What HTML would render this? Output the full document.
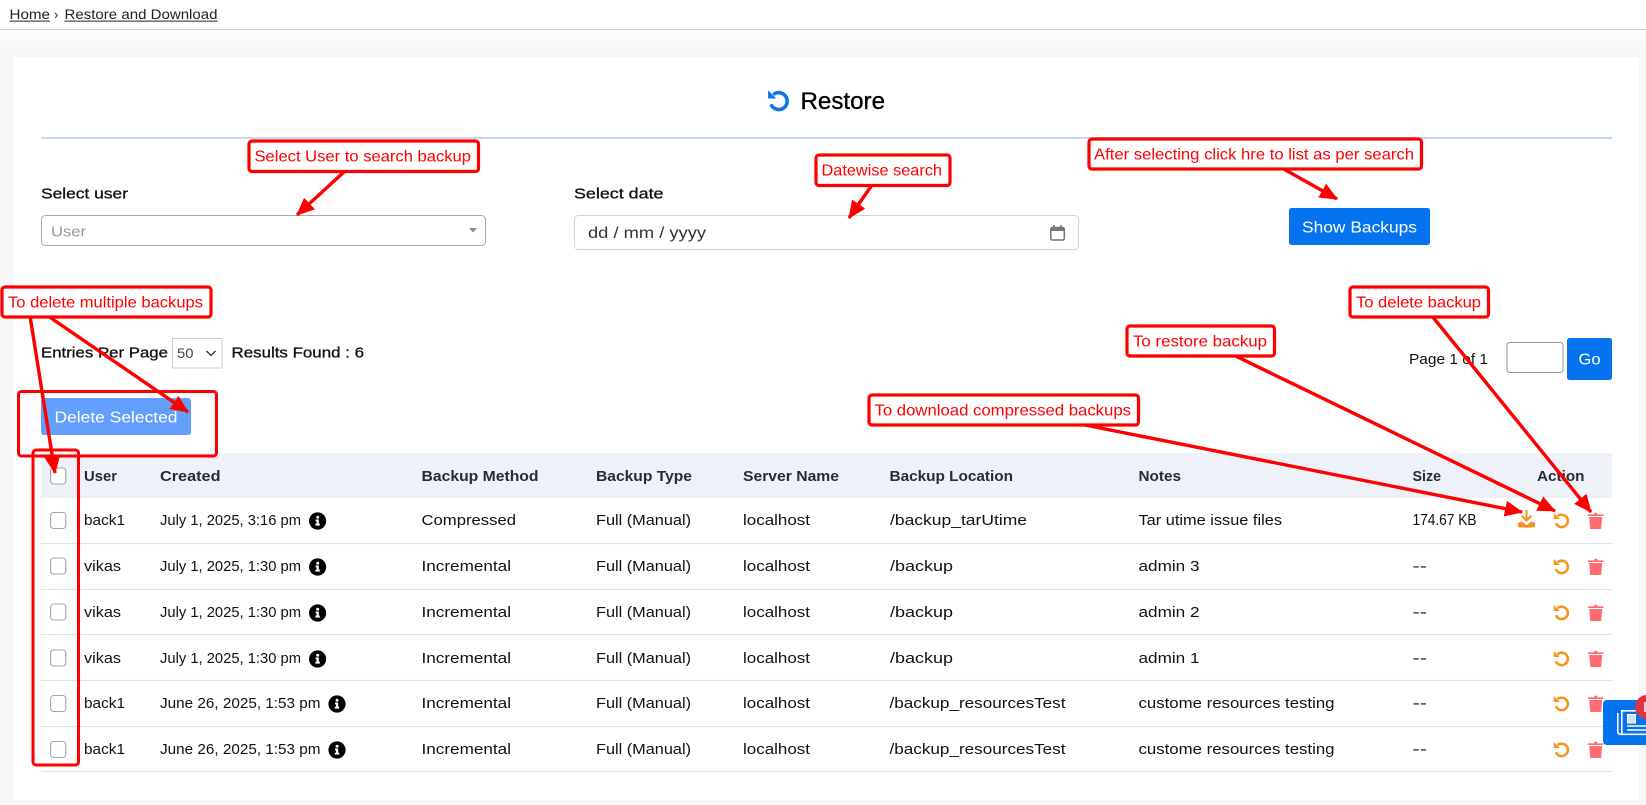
<!DOCTYPE html>
<html lang="en"><head><meta charset="utf-8"><title>Restore</title>
<style>
html,body{margin:0;padding:0;width:1646px;height:805px;overflow:hidden;background:#f6f6f6}
svg{display:block}
text{font-family:"Liberation Sans",sans-serif;font-size:15px;fill:#111}
.h{font-weight:700;fill:#262b36;font-size:14.5px}
.m{stroke:#111;stroke-width:.3px}
.a{fill:#f00;font-size:16px}
.box{fill:#fff;stroke:#f00;stroke-width:3.2}
.ar{stroke:#f00;stroke-width:3.4;fill:none;marker-end:url(#mh)}
.cb{fill:#fff;stroke:#a4a4ac;stroke-width:1.1}
.ln{stroke:#dee2e6;stroke-width:1.3}
</style></head><body>
<svg width="1646" height="805" viewBox="0 0 1646 805" xmlns="http://www.w3.org/2000/svg">
<defs>
<linearGradient id="tg" x1="0" y1="0" x2="0" y2="1"><stop offset="0" stop-color="#fdfdfd"/><stop offset="1" stop-color="#f5f5f5"/></linearGradient>
<marker id="mh" markerUnits="userSpaceOnUse" markerWidth="20" markerHeight="18" refX="17" refY="8" orient="auto"><path d="M0 0L18 8L0 16Z" fill="#f00"/></marker>
<g id="rs"><path d="M4.6 4.2A6.2 6.2 0 1 1 2.9 11.2" fill="none" stroke="#f7931e" stroke-width="2.6"/><path d="M.8 1V7H6.8Z" fill="#f7931e"/></g>
<g id="tr"><path d="M0 2.4H6L6.6 .8H9L9.6 2.4H15.4V4H0Z" fill="#ff6b70"/><path d="M1.2 5H14.2L13.1 17H2.3Z" fill="#ff6b70"/></g>
<g id="inf"><circle cx="0" cy="0" r="8.6" fill="#000"/><circle cx=".1" cy="-3.8" r="1.5" fill="#fff"/><path d="M-2 -1.5H1.2V2.6H2.2V4.6H-2.2V2.6H-1V.4H-2Z" fill="#fff"/></g>
</defs>

<rect x="0" y="0" width="1646" height="29" fill="#fff"/>
<rect x="0" y="29" width="1646" height="1.3" fill="#cfcfcf"/>
<rect x="0" y="30" width="1646" height="27" fill="url(#tg)"/>
<rect x="14" y="57" width="1625" height="743" fill="#fff"/>

<text x="9.5" y="19" style="font-size:13.5px;fill:#222" textLength="40.5" lengthAdjust="spacingAndGlyphs">Home</text>
<rect x="9.5" y="20.6" width="40.5" height="1" fill="#222"/>
<text x="54" y="19" style="font-size:13px;fill:#222">›</text>
<text x="64.5" y="19" style="font-size:13.5px;fill:#222" textLength="153" lengthAdjust="spacingAndGlyphs">Restore and Download</text>
<rect x="64.5" y="20.6" width="153" height="1" fill="#222"/>

<g transform="translate(767,89) scale(1.36)"><path d="M4.6 4.2A6.2 6.2 0 1 1 2.9 11.2" fill="none" stroke="#0a75ea" stroke-width="2.6"/><path d="M.8 1V7H6.8Z" fill="#0a75ea"/></g>
<text x="800.5" y="109" style="font-size:24px;fill:#000;stroke:#000;stroke-width:.35" textLength="84.5" lengthAdjust="spacingAndGlyphs">Restore</text>
<rect x="41" y="137" width="1571" height="2" fill="#c2dcf8"/>

<text class="m" x="41" y="198.500" textLength="87" lengthAdjust="spacingAndGlyphs">Select user</text>
<text class="m" x="574" y="198.500" textLength="89.500" lengthAdjust="spacingAndGlyphs">Select date</text>

<rect x="41.500" y="215.500" width="444" height="30" rx="4" fill="#fff" stroke="#aaa"/>
<text x="51" y="236.500" style="fill:#999" textLength="35" lengthAdjust="spacingAndGlyphs">User</text>
<path d="M469 228H477L473 232.500Z" fill="#888"/>
<rect x="574.500" y="215.500" width="504" height="34" rx="4" fill="#fff" stroke="#ced4da"/>
<text x="588" y="238" style="font-size:16px;fill:#333" textLength="118" lengthAdjust="spacingAndGlyphs">dd / mm / yyyy</text>
<g fill="none" stroke="#777"><rect x="1050.800" y="227.500" width="13.500" height="12.500" rx="1.500" stroke-width="1.500"/><path d="M1050.500 227.500H1064.500V231H1050.500Z" fill="#777" stroke="none"/><path d="M1054 225V228M1061 225V228" stroke-width="1.600"/></g>

<rect x="1289" y="208" width="141" height="37" rx="2.500" fill="#0573ef"/>
<text x="1302" y="232.500" style="fill:#fff;font-size:15.500px" textLength="115" lengthAdjust="spacingAndGlyphs">Show Backups</text>

<text class="m" x="41" y="357.500" textLength="127" lengthAdjust="spacingAndGlyphs">Entries Per Page</text>
<rect x="172.500" y="338.500" width="49.500" height="29.500" fill="#fff" stroke="#ccc"/>
<text x="177" y="358" style="font-size:14px;fill:#444" textLength="16.500" lengthAdjust="spacingAndGlyphs">50</text>
<path d="M206.500 351L211 355.500L215.500 351" fill="none" stroke="#333" stroke-width="1.300"/>
<text class="m" x="231.500" y="357.500" textLength="132.500" lengthAdjust="spacingAndGlyphs">Results Found : 6</text>

<text x="1409" y="364" textLength="79" lengthAdjust="spacingAndGlyphs">Page 1 of 1</text>
<rect x="1507" y="342.500" width="56" height="30" rx="3" fill="#fff" stroke="#8f949e"/>
<rect x="1567" y="338" width="45" height="42" rx="2.500" fill="#0573ef"/>
<text x="1578.500" y="364.500" style="fill:#fff;font-size:15.500px" textLength="22" lengthAdjust="spacingAndGlyphs">Go</text>

<rect x="41" y="398" width="150" height="37" rx="3" fill="#639ffb"/>
<text x="54.500" y="422.500" style="fill:#fff;font-size:15.500px" textLength="123" lengthAdjust="spacingAndGlyphs">Delete Selected</text>

<rect x="41" y="453" width="1571" height="45" fill="#eef1f7"/>
<text class="h" x="84" y="481" textLength="33" lengthAdjust="spacingAndGlyphs">User</text>
<text class="h" x="160" y="481" textLength="60.500" lengthAdjust="spacingAndGlyphs">Created</text>
<text class="h" x="421.500" y="481" textLength="117" lengthAdjust="spacingAndGlyphs">Backup Method</text>
<text class="h" x="596" y="481" textLength="96" lengthAdjust="spacingAndGlyphs">Backup Type</text>
<text class="h" x="743" y="481" textLength="96" lengthAdjust="spacingAndGlyphs">Server Name</text>
<text class="h" x="889.500" y="481" textLength="123.500" lengthAdjust="spacingAndGlyphs">Backup Location</text>
<text class="h" x="1138.500" y="481" textLength="42.500" lengthAdjust="spacingAndGlyphs">Notes</text>
<text class="h" x="1412.500" y="481" style="font-size:15px" textLength="28.500" lengthAdjust="spacingAndGlyphs">Size</text>
<text class="h" x="1537" y="481" textLength="47.500" lengthAdjust="spacingAndGlyphs">Action</text>

<path class="ln" d="M41 543.500H1612M41 589.500H1612M41 634.500H1612M41 680.500H1612M41 726.500H1612M41 771.500H1612"/>

<rect class="cb" x="50.600" y="468" width="15.200" height="16" rx="3"/>
<rect class="cb" x="50.600" y="512.500" width="15.200" height="16" rx="3"/>
<rect class="cb" x="50.600" y="558" width="15.200" height="16" rx="3"/>
<rect class="cb" x="50.600" y="604" width="15.200" height="16" rx="3"/>
<rect class="cb" x="50.600" y="650" width="15.200" height="16" rx="3"/>
<rect class="cb" x="50.600" y="695.500" width="15.200" height="16" rx="3"/>
<rect class="cb" x="50.600" y="741.500" width="15.200" height="16" rx="3"/>

<text x="84" y="525" textLength="41" lengthAdjust="spacingAndGlyphs">back1</text>
<text x="160" y="525" textLength="141" lengthAdjust="spacingAndGlyphs">July 1, 2025, 3:16 pm</text>
<use href="#inf" x="317.600" y="521"/>
<text x="421.500" y="525" textLength="94.500" lengthAdjust="spacingAndGlyphs">Compressed</text>
<text x="596" y="525" textLength="95" lengthAdjust="spacingAndGlyphs">Full (Manual)</text>
<text x="743" y="525" textLength="67" lengthAdjust="spacingAndGlyphs">localhost</text>
<text x="890" y="525" textLength="137" lengthAdjust="spacingAndGlyphs">/backup_tarUtime</text>
<text x="1138.500" y="525" textLength="143.500" lengthAdjust="spacingAndGlyphs">Tar utime issue files</text>
<text x="1412.500" y="525" style="font-size:15.5px" textLength="64" lengthAdjust="spacingAndGlyphs">174.67 KB</text>

<text x="84" y="571" textLength="37" lengthAdjust="spacingAndGlyphs">vikas</text>
<text x="160" y="571" textLength="141" lengthAdjust="spacingAndGlyphs">July 1, 2025, 1:30 pm</text>
<use href="#inf" x="317.600" y="567"/>
<text x="421.500" y="571" textLength="89.500" lengthAdjust="spacingAndGlyphs">Incremental</text>
<text x="596" y="571" textLength="95" lengthAdjust="spacingAndGlyphs">Full (Manual)</text>
<text x="743" y="571" textLength="67" lengthAdjust="spacingAndGlyphs">localhost</text>
<text x="890" y="571" textLength="63" lengthAdjust="spacingAndGlyphs">/backup</text>
<text x="1138.500" y="571" textLength="61" lengthAdjust="spacingAndGlyphs">admin 3</text>
<text x="1412.500" y="571" textLength="14.500" lengthAdjust="spacingAndGlyphs">--</text>

<text x="84" y="617" textLength="37" lengthAdjust="spacingAndGlyphs">vikas</text>
<text x="160" y="617" textLength="141" lengthAdjust="spacingAndGlyphs">July 1, 2025, 1:30 pm</text>
<use href="#inf" x="317.600" y="613"/>
<text x="421.500" y="617" textLength="89.500" lengthAdjust="spacingAndGlyphs">Incremental</text>
<text x="596" y="617" textLength="95" lengthAdjust="spacingAndGlyphs">Full (Manual)</text>
<text x="743" y="617" textLength="67" lengthAdjust="spacingAndGlyphs">localhost</text>
<text x="890" y="617" textLength="63" lengthAdjust="spacingAndGlyphs">/backup</text>
<text x="1138.500" y="617" textLength="61" lengthAdjust="spacingAndGlyphs">admin 2</text>
<text x="1412.500" y="617" textLength="14.500" lengthAdjust="spacingAndGlyphs">--</text>

<text x="84" y="663" textLength="37" lengthAdjust="spacingAndGlyphs">vikas</text>
<text x="160" y="663" textLength="141" lengthAdjust="spacingAndGlyphs">July 1, 2025, 1:30 pm</text>
<use href="#inf" x="317.600" y="659"/>
<text x="421.500" y="663" textLength="89.500" lengthAdjust="spacingAndGlyphs">Incremental</text>
<text x="596" y="663" textLength="95" lengthAdjust="spacingAndGlyphs">Full (Manual)</text>
<text x="743" y="663" textLength="67" lengthAdjust="spacingAndGlyphs">localhost</text>
<text x="890" y="663" textLength="63" lengthAdjust="spacingAndGlyphs">/backup</text>
<text x="1138.500" y="663" textLength="61" lengthAdjust="spacingAndGlyphs">admin 1</text>
<text x="1412.500" y="663" textLength="14.500" lengthAdjust="spacingAndGlyphs">--</text>

<text x="84" y="708" textLength="41" lengthAdjust="spacingAndGlyphs">back1</text>
<text x="160" y="708" textLength="160.500" lengthAdjust="spacingAndGlyphs">June 26, 2025, 1:53 pm</text>
<use href="#inf" x="337" y="704"/>
<text x="421.500" y="708" textLength="89.500" lengthAdjust="spacingAndGlyphs">Incremental</text>
<text x="596" y="708" textLength="95" lengthAdjust="spacingAndGlyphs">Full (Manual)</text>
<text x="743" y="708" textLength="67" lengthAdjust="spacingAndGlyphs">localhost</text>
<text x="889.500" y="708" textLength="176" lengthAdjust="spacingAndGlyphs">/backup_resourcesTest</text>
<text x="1138.500" y="708" textLength="196" lengthAdjust="spacingAndGlyphs">custome resources testing</text>
<text x="1412.500" y="708" textLength="14.500" lengthAdjust="spacingAndGlyphs">--</text>

<text x="84" y="754" textLength="41" lengthAdjust="spacingAndGlyphs">back1</text>
<text x="160" y="754" textLength="160.500" lengthAdjust="spacingAndGlyphs">June 26, 2025, 1:53 pm</text>
<use href="#inf" x="337" y="750"/>
<text x="421.500" y="754" textLength="89.500" lengthAdjust="spacingAndGlyphs">Incremental</text>
<text x="596" y="754" textLength="95" lengthAdjust="spacingAndGlyphs">Full (Manual)</text>
<text x="743" y="754" textLength="67" lengthAdjust="spacingAndGlyphs">localhost</text>
<text x="889.500" y="754" textLength="176" lengthAdjust="spacingAndGlyphs">/backup_resourcesTest</text>
<text x="1138.500" y="754" textLength="196" lengthAdjust="spacingAndGlyphs">custome resources testing</text>
<text x="1412.500" y="754" textLength="14.500" lengthAdjust="spacingAndGlyphs">--</text>

<g fill="#f7931e"><path d="M1525.500 510H1527.500V518L1530.800 515L1532.200 516.400L1526.500 522L1520.800 516.400L1522.200 515L1525.500 518Z"/><path d="M1518 523.500C1519 521.500 1521.500 521 1523 522.500L1526.500 525L1530 522.500C1531.500 521 1534 521.500 1535 523.500V526C1535 527 1534.500 527.500 1533.500 527.500H1519.500C1518.500 527.500 1518 527 1518 526Z"/></g>
<use href="#rs" x="1553" y="512"/><use href="#rs" x="1553" y="558"/><use href="#rs" x="1553" y="604"/><use href="#rs" x="1553" y="650"/><use href="#rs" x="1553" y="695"/><use href="#rs" x="1553" y="741"/>
<use href="#tr" x="1588" y="512"/><use href="#tr" x="1588" y="558"/><use href="#tr" x="1588" y="604"/><use href="#tr" x="1588" y="650"/><use href="#tr" x="1588" y="695"/><use href="#tr" x="1588" y="741"/>

<path d="M1607 700H1646V745H1607A4 4 0 0 1 1603 741V704A4 4 0 0 1 1607 700Z" fill="#0573ef"/>
<g fill="none" stroke="#fff" stroke-width="1.600">
<path d="M1617.800 713V731.500Q1617.800 734.300 1620.500 734.300H1646"/>
<path d="M1621.800 734V710.800H1646"/>
<rect x="1627.500" y="714.500" width="8" height="8.500" fill="#cfe3fb" stroke-width="1"/>
<path d="M1627 726H1646M1627 730H1646"/>
</g>
<circle cx="1647" cy="707" r="12" fill="#dc3545"/>
<rect x="1644" y="702" width="2" height="10" fill="#f6c6cb"/>

<line class="ar" x1="30" y1="316" x2="55" y2="473"/>
<line class="ar" x1="48" y1="316" x2="188" y2="412"/>
<rect x="18.500" y="391.500" width="198" height="64.500" rx="3" fill="none" stroke="#f00" stroke-width="3"/>
<rect x="33" y="450" width="45.500" height="315" rx="3" fill="none" stroke="#f00" stroke-width="3"/>

<line class="ar" x1="345" y1="171" x2="297" y2="215"/>
<line class="ar" x1="872" y1="185" x2="849" y2="218"/>
<line class="ar" x1="1282" y1="168" x2="1337" y2="199"/>
<line class="ar" x1="1080" y1="424" x2="1522" y2="512"/>
<line class="ar" x1="1233.500" y1="355" x2="1555" y2="511"/>
<line class="ar" x1="1432" y1="316" x2="1591" y2="512"/>

<rect class="box" x="249" y="141" width="229.500" height="30.500" rx="3"/>
<text class="a" x="254.500" y="161.500" textLength="216.500" lengthAdjust="spacingAndGlyphs">Select User to search backup</text>
<rect class="box" x="816" y="155" width="134" height="30.500" rx="3"/>
<text class="a" x="821.500" y="175.500" textLength="120.500" lengthAdjust="spacingAndGlyphs">Datewise search</text>
<rect class="box" x="1089" y="139" width="332.500" height="30" rx="3"/>
<text class="a" x="1094" y="159.500" textLength="320" lengthAdjust="spacingAndGlyphs">After selecting click hre to list as per search</text>
<rect class="box" x="2" y="287" width="209" height="30" rx="3"/>
<text class="a" x="8" y="307.500" textLength="195" lengthAdjust="spacingAndGlyphs">To delete multiple backups</text>
<rect class="box" x="1350" y="287" width="138.500" height="30" rx="3"/>
<text class="a" x="1356" y="307.500" textLength="125" lengthAdjust="spacingAndGlyphs">To delete backup</text>
<rect class="box" x="1127" y="326" width="147.500" height="30" rx="3"/>
<text class="a" x="1133" y="346.500" textLength="134" lengthAdjust="spacingAndGlyphs">To restore backup</text>
<rect class="box" x="869" y="395" width="269.500" height="30" rx="3"/>
<text class="a" x="874.500" y="415.500" textLength="256.500" lengthAdjust="spacingAndGlyphs">To download compressed backups</text>
</svg>
</body></html>
